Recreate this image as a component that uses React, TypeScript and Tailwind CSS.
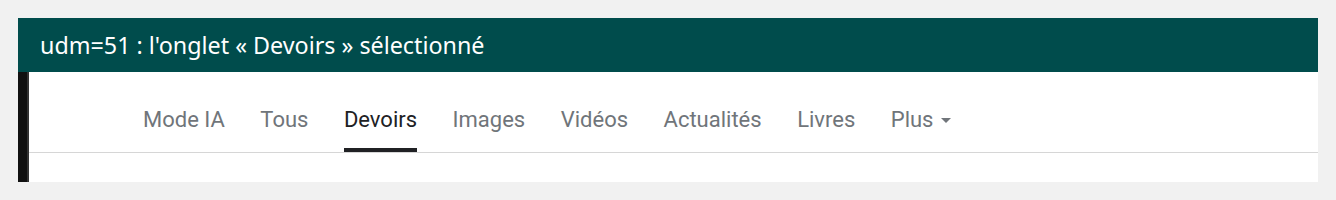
import React from "react";

const tabs = ["Mode IA", "Tous", "Devoirs", "Images", "Vidéos", "Actualités", "Livres"];

export default function App() {
  return (
    <div className="w-[1336px] h-[200px] bg-[#f1f1f1] p-[18px]">
      <div className="flex flex-col w-[1300px] h-[164px]">
        <div className="h-[54px] bg-[#004c4c] flex items-center pl-[22px] pt-[1px] text-white text-[23.3px] font-['Noto_Sans',sans-serif]">
          udm=51 : l'onglet « Devoirs » sélectionné
        </div>
        <div className="flex flex-1 bg-white">
          <div className="w-[11px] bg-[#111111] border-r-2 border-[#333333]" />
          <div className="flex-1 flex flex-col">
            <div className="flex h-[81px] border-b border-[#d6d6d6] pl-[114px] gap-[35.5px] font-['Roboto',Arial,sans-serif] text-[22px] leading-[26px]">
              {tabs.map((t) => {
                const active = t === "Devoirs";
                return (
                  <div key={t} className="flex flex-col pt-[35px]">
                    <span className={active ? "text-[#202124]" : "text-[#70757a]"}>{t}</span>
                    <div className={"mt-[15px] h-[4px] " + (active ? "bg-[#202124]" : "bg-transparent")} />
                  </div>
                );
              })}
              <div className="flex flex-col pt-[35px]">
                <span className="text-[#70757a] flex items-center">
                  Plus
                  <svg width="10" height="5" viewBox="0 0 10 5" className="ml-[8px] mt-[1px]">
                    <path d="M0 0 L10 0 L5 5 Z" fill="#70757a" />
                  </svg>
                </span>
              </div>
            </div>
          </div>
        </div>
      </div>
    </div>
  );
}
